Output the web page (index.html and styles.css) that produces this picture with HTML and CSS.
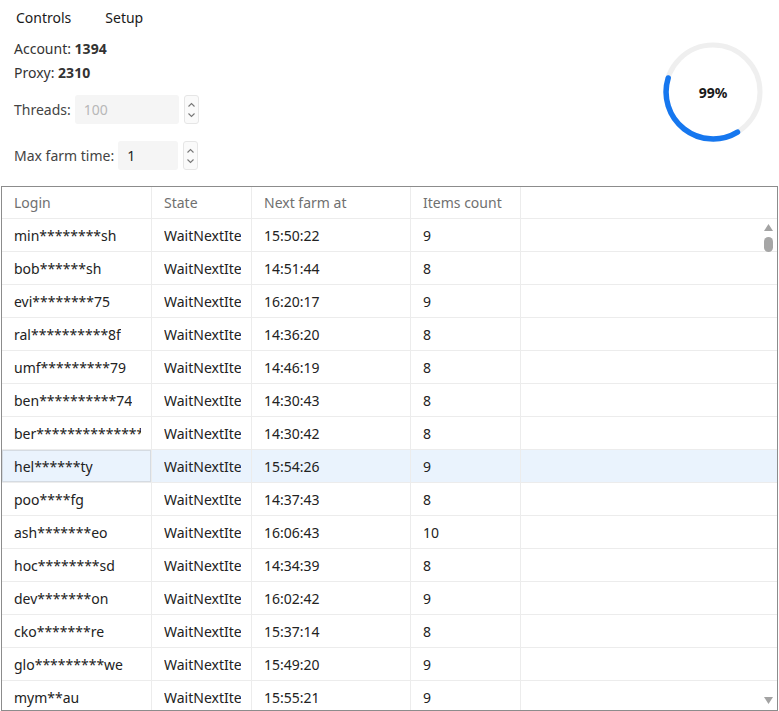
FILE: index.html
```html
<!DOCTYPE html>
<html>
<head>
<meta charset="utf-8">
<link rel="stylesheet" href="styles.css">
</head>
<body>
<div class="top">
  <div class="left">
    <div class="menu"><span class="menu-item">Controls</span><span class="menu-item">Setup</span></div>
    <div class="stats">
      <div class="stat">Account: <b>1394</b></div>
      <div class="stat">Proxy: <b>2310</b></div>
    </div>
    <div class="field threads">
      <span class="label">Threads:</span>
      <span class="input disabled">100</span>
      <span class="spin"><svg viewBox="0 0 15 29" width="15" height="29"><path d="M4.5 11.5 L7.5 8.5 L10.5 11.5" /><path d="M4.5 18.5 L7.5 21.5 L10.5 18.5" /></svg></span>
    </div>
    <div class="field farm">
      <span class="label">Max farm time:</span>
      <span class="input">1</span>
      <span class="spin"><svg viewBox="0 0 15 29" width="15" height="29"><path d="M4.5 11.5 L7.5 8.5 L10.5 11.5" /><path d="M4.5 18.5 L7.5 21.5 L10.5 18.5" /></svg></span>
    </div>
  </div>
  <div class="progress">
    <svg viewBox="0 0 100 100" width="100" height="100">
      <circle cx="50" cy="50" r="47" class="track"/>
      <path class="arc" d="M 74.5 90.1 A 47 47 0 0 1 5.2 36.0"/>
    </svg>
    <span class="pct">99%</span>
  </div>
</div>
<div class="grid">
  <div class="row head"><div class="c">Login</div><div class="c">State</div><div class="c">Next farm at</div><div class="c">Items count</div><div class="c fill"></div></div>
  <div class="row"><div class="c"><span>min********sh</span></div><div class="c"><span>WaitNextItem</span></div><div class="c">15:50:22</div><div class="c">9</div><div class="c fill"></div></div>
  <div class="row"><div class="c"><span>bob******sh</span></div><div class="c"><span>WaitNextItem</span></div><div class="c">14:51:44</div><div class="c">8</div><div class="c fill"></div></div>
  <div class="row"><div class="c"><span>evi********75</span></div><div class="c"><span>WaitNextItem</span></div><div class="c">16:20:17</div><div class="c">9</div><div class="c fill"></div></div>
  <div class="row"><div class="c"><span>ral**********8f</span></div><div class="c"><span>WaitNextItem</span></div><div class="c">14:36:20</div><div class="c">8</div><div class="c fill"></div></div>
  <div class="row"><div class="c"><span>umf*********79</span></div><div class="c"><span>WaitNextItem</span></div><div class="c">14:46:19</div><div class="c">8</div><div class="c fill"></div></div>
  <div class="row"><div class="c"><span>ben**********74</span></div><div class="c"><span>WaitNextItem</span></div><div class="c">14:30:43</div><div class="c">8</div><div class="c fill"></div></div>
  <div class="row"><div class="c"><span>ber**************3p</span></div><div class="c"><span>WaitNextItem</span></div><div class="c">14:30:42</div><div class="c">8</div><div class="c fill"></div></div>
  <div class="row sel"><div class="c focus"><span>hel******ty</span></div><div class="c"><span>WaitNextItem</span></div><div class="c">15:54:26</div><div class="c">9</div><div class="c fill"></div></div>
  <div class="row"><div class="c"><span>poo****fg</span></div><div class="c"><span>WaitNextItem</span></div><div class="c">14:37:43</div><div class="c">8</div><div class="c fill"></div></div>
  <div class="row"><div class="c"><span>ash*******eo</span></div><div class="c"><span>WaitNextItem</span></div><div class="c">16:06:43</div><div class="c">10</div><div class="c fill"></div></div>
  <div class="row"><div class="c"><span>hoc********sd</span></div><div class="c"><span>WaitNextItem</span></div><div class="c">14:34:39</div><div class="c">8</div><div class="c fill"></div></div>
  <div class="row"><div class="c"><span>dev*******on</span></div><div class="c"><span>WaitNextItem</span></div><div class="c">16:02:42</div><div class="c">9</div><div class="c fill"></div></div>
  <div class="row"><div class="c"><span>cko*******re</span></div><div class="c"><span>WaitNextItem</span></div><div class="c">15:37:14</div><div class="c">8</div><div class="c fill"></div></div>
  <div class="row"><div class="c"><span>glo*********we</span></div><div class="c"><span>WaitNextItem</span></div><div class="c">15:49:20</div><div class="c">9</div><div class="c fill"></div></div>
  <div class="row"><div class="c"><span>mym**au</span></div><div class="c"><span>WaitNextItem</span></div><div class="c">15:55:21</div><div class="c">9</div><div class="c fill"></div></div>
  <div class="scrollbar">
    <svg class="arrow up" viewBox="0 0 9 7" width="9" height="7"><path d="M4.5 0 L9 7 L0 7 Z"/></svg>
    <div class="thumb"></div>
    <svg class="arrow down" viewBox="0 0 9 7" width="9" height="7"><path d="M0 0 L9 0 L4.5 7 Z"/></svg>
  </div>
</div>
</body>
</html>
```

FILE: styles.css
```css
html, body {
  margin: 0;
  padding: 0;
  background: #ffffff;
}
body {
  font-family: "Noto Sans", "Open Sans", sans-serif;
  font-size: 14px;
  color: #222;
  width: 779px;
  height: 711px;
  overflow: hidden;
}
.top {
  display: flex;
  justify-content: space-between;
  height: 186px;
}
.left {
  display: flex;
  flex-direction: column;
}
.menu {
  display: flex;
  height: 34px;
  align-items: center;
  padding-left: 16px;
  gap: 34px;
}
.menu-item {
  color: #1a1a1a;
}
.stats {
  padding-top: 3px;
  padding-left: 14px;
}
.stat {
  line-height: 24px;
  color: #333;
}
.stat b {
  font-weight: 700;
  color: #333;
}
.field {
  display: flex;
  align-items: center;
  padding-left: 14px;
  height: 29px;
}
.threads { margin-top: 10px; }
.farm { margin-top: 17px; }
.label {
  color: #444;
  margin-right: 4px;
}
.input {
  box-sizing: border-box;
  height: 29px;
  line-height: 29px;
  background: #f5f5f5;
  border-radius: 3px;
  padding-left: 9px;
  color: #222;
}
.threads .input { width: 104px; }
.farm .input { width: 60px; }
.input.disabled {
  color: #b8b8b8;
}
.spin {
  box-sizing: border-box;
  margin-left: 5px;
  width: 15px;
  height: 29px;
  border: 1px solid #e6e6e6;
  border-radius: 3px;
  background: #fafafa;
  display: flex;
}
.spin svg {
  margin: -1px;
  fill: none;
  stroke: #777;
  stroke-width: 1.1;
}
.progress {
  position: relative;
  width: 100px;
  height: 100px;
  margin-top: 42px;
  margin-right: 16px;
}
.progress svg {
  display: block;
}
.track {
  fill: none;
  stroke: #efefef;
  stroke-width: 5;
}
.arc {
  fill: none;
  stroke: #1677ef;
  stroke-width: 5.5;
  stroke-linecap: round;
}
.pct {
  position: absolute;
  inset: 0;
  display: flex;
  align-items: center;
  justify-content: center;
  font-weight: 700;
  font-size: 14px;
  color: #1a1a1a;
}
.grid {
  position: relative;
  box-sizing: border-box;
  margin-left: 1px;
  width: 777px;
  height: 525px;
  border: 1px solid #8c8c8c;
  overflow: hidden;
}
.row {
  display: grid;
  grid-template-columns: 150px 100px 159px 110px 1fr;
  height: 33px;
  box-sizing: border-box;
  border-bottom: 1px solid #ececec;
}
.row.head {
  height: 32px;
}
.c {
  box-sizing: border-box;
  border-right: 1px solid #ececec;
  padding-left: 12px;
  display: flex;
  align-items: center;
  white-space: nowrap;
  overflow: hidden;
  color: #222;
}
.c span {
  display: block;
  overflow: hidden;
  white-space: nowrap;
  max-width: calc(100% - 10px);
}
.c.fill {
  border-right: none;
}
.head .c {
  color: #707070;
}
.row.sel {
  background: #eaf3fd;
}
.c.focus {
  box-shadow: inset 0 0 0 1px #d5dbe2;
}
.scrollbar {
  position: absolute;
  right: 4px;
  top: 33px;
  bottom: 0;
  width: 9px;
}
.arrow {
  position: absolute;
  left: 0;
  fill: #a3a3a3;
}
.arrow.up { top: 4px; }
.arrow.down { bottom: 6px; }
.thumb {
  position: absolute;
  left: 0;
  top: 17px;
  width: 9px;
  height: 15px;
  border-radius: 5px;
  background: #a6a6a6;
}
```
